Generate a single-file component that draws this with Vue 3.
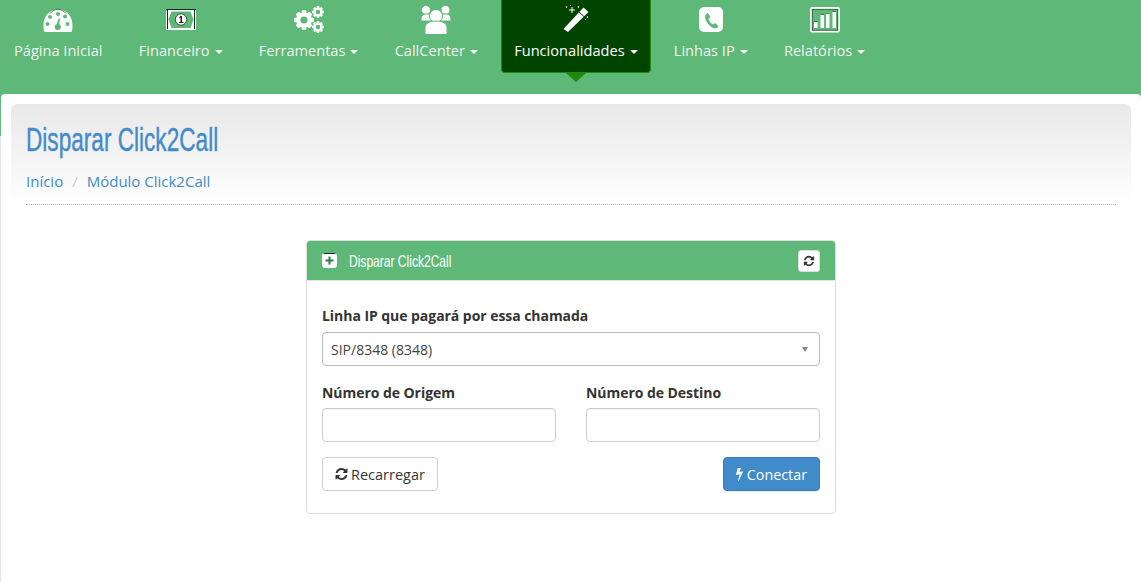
<script setup>
const refresh = 'M1511 1056q0 5-1 7-64 268-268 434.5t-478 166.5q-146 0-282.5-55t-243.5-157l-129 129q-19 19-45 19t-45-19-19-45v-448q0-26 19-45t45-19h448q26 0 45 19t19 45-19 45l-137 137q71 66 161 102t187 36q134 0 250-65t186-179q11-17 53-117 8-23 30-23h192q13 0 22.5 9.5t9.5 22.5zm25-800v448q0 26-19 45t-45 19h-448q-26 0-45-19t-19-45 19-45l138-138q-148-137-349-137-134 0-250 65t-186 179q-11 17-53 117-8 23-30 23h-199q-13 0-22.5-9.5t-9.5-22.5v-7q65-268 270-434.5t480-166.5q146 0 284 55.5t245 156.5l130-129q19-19 45-19t45 19 19 45z'
const bolt = 'M1333 566q18 20 7 44l-540 1157q-13 25-42 25-4 0-14-2-17-5-25.5-19t-4.5-30l197-808-406 101q-4 1-12 1-18 0-31-11-18-15-13-39l201-825q4-14 16-23t28-9h328q19 0 32 12.5t13 29.5q0 8-5 18l-171 463 396-98q8-2 12-2 19 0 34 15z'

function gear(cx, cy, outer, root, hole, teeth) {
  const step = (Math.PI * 2) / teeth
  const pts = []
  for (let i = 0; i < teeth; i++) {
    const a = i * step
    const offs = [[-0.5, root], [-0.27, outer], [0.27, outer], [0.5, root]]
    for (const [o, r] of offs) {
      const t = a + o * step * 0.9
      pts.push((cx + r * Math.cos(t)).toFixed(2) + ' ' + (cy + r * Math.sin(t)).toFixed(2))
    }
  }
  const ring = `M${cx - hole} ${cy}a${hole} ${hole} 0 1 0 ${hole * 2} 0a${hole} ${hole} 0 1 0 ${-hole * 2} 0z`
  return 'M' + pts.join('L') + 'z' + ring
}
const gears = [gear(11, 15, 10, 7.6, 3.6, 8), gear(25, 7, 6, 4.4, 2.3, 8), gear(25, 22, 6, 4.4, 2.3, 8)]

const items = [
  { label: 'Página Inicial', icon: 'gauge' },
  { label: 'Financeiro', icon: 'money', caret: true },
  { label: 'Ferramentas', icon: 'gears', caret: true },
  { label: 'CallCenter', icon: 'users', caret: true },
  { label: 'Funcionalidades', icon: 'wand', caret: true, active: true },
  { label: 'Linhas IP', icon: 'phone', caret: true },
  { label: 'Relatórios', icon: 'chart', caret: true }
]
</script>

<template>
  <div class="page">
    <nav class="nav">
      <a v-for="item in items" :key="item.label" class="nav-item" :class="{ active: item.active }">
        <span class="nav-icon">
          <svg v-if="item.icon === 'gauge'" width="30" height="30" viewBox="0 0 30 30">
            <path fill="#fff" fill-rule="evenodd" d="M1.500 27C.7 25 .5 23 .5 20 .5 11 7 4.200 15 4.200S29.500 11 29.500 20c0 3-.2 5-1 7zM15 7a2 2 0 1 1 0 4 2 2 0 0 1 0-4zM7 10a2 2 0 1 1 0 4 2 2 0 0 1 0-4zM22 9.500a2 2 0 1 1 0 4 2 2 0 0 1 0-4zM4.500 17a2 2 0 1 1 0 4 2 2 0 0 1 0-4zM24.500 17a2 2 0 1 1 0 4 2 2 0 0 1 0-4zM17 13.500l-.7 5.800a3.100 3.100 0 1 1-2.500-.2l1.900-5.800z"/>
            <path fill="none" stroke="#1c3b28" stroke-width=".7" d="M7 8.500C9 6 12 4.300 15 4.300S21 6 23 8.500"/>
          </svg>
          <svg v-else-if="item.icon === 'money'" width="30" height="30" viewBox="0 0 30 30">
            <path fill="#fff" d="M0 4h30v21H0z"/>
            <path fill="#1a2a20" d="M0 4h30v1H0zM1 5h1v19H1zM28 5h1v19h-1z"/>
            <path fill="#5eb877" d="M2.500 14.500l3-8h19l3 8-3 8.500h-19z"/>
            <circle cx="15" cy="14.500" r="5.700" fill="#fff" stroke="#1a2a20" stroke-width=".8"/>
            <path fill="#1a2a20" d="M14.500 11h1.500v6h1.500v1h-4.500v-1H14.500v-4.300l-1.300.6v-1z"/>
          </svg>
          <svg v-else-if="item.icon === 'gears'" width="32" height="30" viewBox="0 0 32 30">
            <path v-for="d in gears" :key="d" :d="d" fill="#fff" fill-rule="evenodd"/>
          </svg>
          <svg v-else-if="item.icon === 'users'" width="32" height="30" viewBox="0 0 32 30">
            <g fill="#fff" stroke="#5eb877" stroke-width="1">
              <circle cx="6" cy="5" r="4.500"/>
              <circle cx="25.500" cy="5" r="4.500"/>
              <path d="M1 16v-2c0-3 2-5 5-5h20c3 0 5 2 5 5v2z"/>
              <circle cx="16" cy="11" r="6.500"/>
              <path d="M5 29.500v-7c0-4 4-6.500 11-6.500s11 2.500 11 6.500v7z"/>
            </g>
          </svg>
          <svg v-else-if="item.icon === 'wand'" width="26" height="30" viewBox="0 0 26 30">
            <path fill="#fff" d="M20.500 2.500l5 4.500L5 27l-4.500-3z"/>
            <path stroke="#004400" stroke-width="1" d="M15.500 6.500l5.500 5"/>
            <path fill="#fff" d="M8.500 2h1v2.500H12v1H9.500V8h-1V5.500H6v-1h2.500z"/>
            <path fill="#cfe6cf" d="M3 1h1v2H3zM7 0h1v1H7zM15 1h1v2h-1zM24 11h1v2h-1zM22 14h1v1h-1z"/>
          </svg>
          <svg v-else-if="item.icon === 'phone'" width="26" height="30" viewBox="0 0 26 30">
            <rect x="1" y="2" width="24" height="25" rx="5" fill="#fff"/>
            <path fill="#5eb877" transform="translate(1 3)" d="M8 5.500c-1.600 1-2.200 2.500-1.800 4.500 1 4 4 8 7.800 10 1.700.8 3.400.6 5-1 .5-.5.500-1 0-1.500l-2.500-2c-.5-.3-1-.3-1.400 0l-1.100 1c-2.200-1.200-3.800-3.300-4.600-5.800l1.200-.8c.5-.4.600-.8.400-1.400L9.400 5.800c-.3-.5-.8-.6-1.400-.3z"/>
          </svg>
          <svg v-else-if="item.icon === 'chart'" width="30" height="30" viewBox="0 0 30 30">
            <rect x="1" y="3" width="28" height="23.500" rx="1" fill="none" stroke="#fff" stroke-width="1.800"/>
            <rect x="2.200" y="4.200" width="25.600" height="21" fill="none" stroke="#1a2a20" stroke-width=".6"/>
            <path fill="#fff" d="M4 17h3.500v6H4zM10.500 10H14v13h-3.500zM16 8.500h3.500V23H16zM22.500 7H26v16h-3.500z"/>
            <path fill="#1a2a20" d="M4 16.400h3.500v.6H4zM10.500 9.400H14v.6h-3.500zM16 7.900h3.500v.6H16zM22.500 6.400H26V7h-3.500z"/>
          </svg>
        </span>
        <span class="nav-label">{{ item.label }}<i v-if="item.caret" class="caret"></i></span>
      </a>
    </nav>

    <main class="content">
      <header class="page-head">
        <h1 class="title"><span class="title-text">Disparar Click2Call</span></h1>
        <div class="crumbs"><a>Início</a><span class="sep">/</span><a>Módulo Click2Call</a></div>
        <div class="dots"></div>
      </header>

      <section class="panel">
        <div class="panel-head">
          <span class="panel-title">
            <svg class="plus" width="15" height="15" viewBox="0 0 15 15">
              <path fill="#fff" d="M3 0h9a3 3 0 0 1 3 3v9a3 3 0 0 1-3 3H3a3 3 0 0 1-3-3V3a3 3 0 0 1 3-3z"/>
              <path fill="#1a2a20" d="M3 0h9a3 3 0 0 1 2 1H1a3 3 0 0 1 2-1z"/>
              <path fill="#2f7a45" d="M6.500 3.500h2v3h3v2h-3v3h-2v-3h-3v-2h3z"/>
            </svg>
            <span class="panel-text">Disparar Click2Call</span>
          </span>
          <button class="mini-btn" type="button">
            <svg width="12" height="12" viewBox="0 0 1536 1792"><path fill="#333" :d="refresh"/></svg>
          </button>
        </div>
        <div class="panel-body">
          <label class="label">Linha IP que pagará por essa chamada</label>
          <div class="select"><span>SIP/8348 (8348)</span><i class="select-arrow"></i></div>
          <div class="cols">
            <div class="col">
              <label class="label">Número de Origem</label>
              <input class="input" type="text" />
            </div>
            <div class="col">
              <label class="label">Número de Destino</label>
              <input class="input" type="text" />
            </div>
          </div>
          <div class="actions">
            <button class="btn" type="button">
              <svg width="13" height="14" viewBox="0 0 1536 1792"><path fill="#333" :d="refresh"/></svg>
              Recarregar
            </button>
            <button class="btn primary" type="button">
              <svg width="7" height="14" viewBox="440 0 912 1792" preserveAspectRatio="xMidYMid meet"><path fill="#fff" :d="bolt"/></svg>
              Conectar
            </button>
          </div>
        </div>
      </section>
    </main>
  </div>
</template>

<style>
html, body { margin: 0; background: #fff; overflow: hidden; }
</style>

<style scoped>
.page {
  width: 1141px;
  height: 582px;
  overflow: hidden;
  font-family: "Open Sans", "Noto Sans", sans-serif;
  font-size: 14px;
  color: #333;
  background: linear-gradient(#5eb877 136px, #e6e6e6 136px);
  display: flex;
  flex-direction: column;
}
.nav {
  height: 94px;
  flex: none;
  background: #5eb877;
  display: flex;
  align-items: flex-start;
  gap: 10.200px;
  padding-left: 1px;
  box-sizing: border-box;
}
.nav-item {
  position: relative;
  height: 73px;
  box-sizing: border-box;
  padding: 0 12px;
  display: flex;
  flex-direction: column;
  align-items: center;
  color: #eef4f0;
  font-size: 14.600px;
  border-radius: 0 0 4px 4px;
  border: 1px solid transparent;
  border-top: 0;
}
.nav-item.active {
  background: #004400;
  border-color: #1f8a0c;
  color: #fff;
}
.nav-item.active::after {
  content: "";
  position: absolute;
  left: 50%;
  bottom: -10px;
  margin-left: -10px;
  border-left: 10px solid transparent;
  border-right: 10px solid transparent;
  border-top: 9px solid #1f8a0c;
}
.nav-icon {
  height: 30px;
  margin-top: 5px;
  display: flex;
  align-items: center;
  justify-content: center;
}
.nav-label {
  margin-top: 5px;
  line-height: 20px;
  white-space: nowrap;
}
.caret {
  display: inline-block;
  margin-left: 5px;
  vertical-align: middle;
  border-left: 4.500px solid transparent;
  border-right: 4.500px solid transparent;
  border-top: 4px solid #fff;
}
.content {
  flex: 1;
  margin-left: 1px;
  background: #fff;
  border-radius: 4px 4px 0 0;
  padding: 10px 10px 0;
  min-height: 0;
}
.page-head {
  height: 101px;
  border-radius: 6px 6px 0 0;
  background: linear-gradient(#e8e8e8, #fff);
  padding: 0 15px;
  box-sizing: border-box;
  display: flex;
  flex-direction: column;
}
.title {
  margin: 17px 0 0;
  font-family: "Liberation Sans", sans-serif;
  font-weight: 400;
  font-size: 33px;
  line-height: 38px;
  color: #428bca;
  white-space: nowrap;
}
.title-text {
  display: inline-block;
  transform: scaleX(.685);
  transform-origin: left center;
  -webkit-text-stroke: .4px #428bca;
}
.crumbs {
  margin-top: 12px;
  font-size: 15px;
  line-height: 20px;
  color: #428bca;
}
.sep {
  color: #ccc;
  padding: 0 9px;
}
.dots {
  margin-top: 13px;
  border-top: 1px dotted #bbb;
}
.panel {
  width: 530px;
  height: 274px;
  box-sizing: border-box;
  margin: 35px auto 0;
  border: 1px solid #ddd;
  border-radius: 4px;
  background: #fff;
}
.panel-head {
  height: 40px;
  box-sizing: border-box;
  background: #5eb877;
  border-bottom: 1px solid #e4e4e4;
  border-radius: 3px 3px 0 0;
  display: flex;
  align-items: center;
  justify-content: space-between;
  padding: 0 15px;
  color: #fff;
}
.panel-title {
  display: flex;
  align-items: center;
  gap: 12px;
}
.panel-text {
  display: inline-block;
  font-family: "Liberation Sans", sans-serif;
  font-size: 16.500px;
  line-height: 20px;
  padding-top: 1px;
  white-space: nowrap;
  width: 103px;
  transform: scaleX(.73);
  transform-origin: left center;
}
.mini-btn {
  width: 22px;
  height: 22px;
  padding: 0;
  border: 1px solid #ddd;
  border-radius: 3px;
  background: #fff;
  display: flex;
  align-items: center;
  justify-content: center;
}
.panel-body {
  padding: 25px 15px 0;
}
.label {
  display: block;
  font-weight: 700;
  line-height: 20px;
  letter-spacing: -.05px;
  margin-bottom: 6px;
}
.select {
  height: 34px;
  box-sizing: border-box;
  border: 1px solid #bbb;
  border-radius: 4px;
  padding: 0 8px;
  display: flex;
  align-items: center;
  justify-content: space-between;
  color: #444;
}
.select-arrow {
  margin-right: 3px;
  border-left: 3.500px solid transparent;
  border-right: 3.500px solid transparent;
  border-top: 5px solid #888;
}
.cols {
  display: flex;
  gap: 30px;
  margin-top: 17px;
}
.col { flex: 1; }
.col .label { margin-bottom: 5px; }
.input {
  display: block;
  width: 100%;
  height: 34px;
  box-sizing: border-box;
  border: 1px solid #ccc;
  border-radius: 4px;
  background: #fff;
  box-shadow: inset 0 1px 1px rgba(0, 0, 0, .05);
}
.actions {
  display: flex;
  justify-content: space-between;
  margin-top: 15px;
}
.btn {
  height: 34px;
  box-sizing: border-box;
  padding: 0 12px;
  font: inherit;
  font-size: 14.500px;
  color: #333;
  background: #fff;
  border: 1px solid #ccc;
  border-radius: 4px;
  display: flex;
  align-items: center;
  gap: 3px;
}
.btn.primary {
  color: #fff;
  font-size: 14.300px;
  gap: 4px;
  background: #428bca;
  border-color: #357ebd;
  box-shadow: 0 1px 2px rgba(0, 0, 0, .08);
}
</style>
